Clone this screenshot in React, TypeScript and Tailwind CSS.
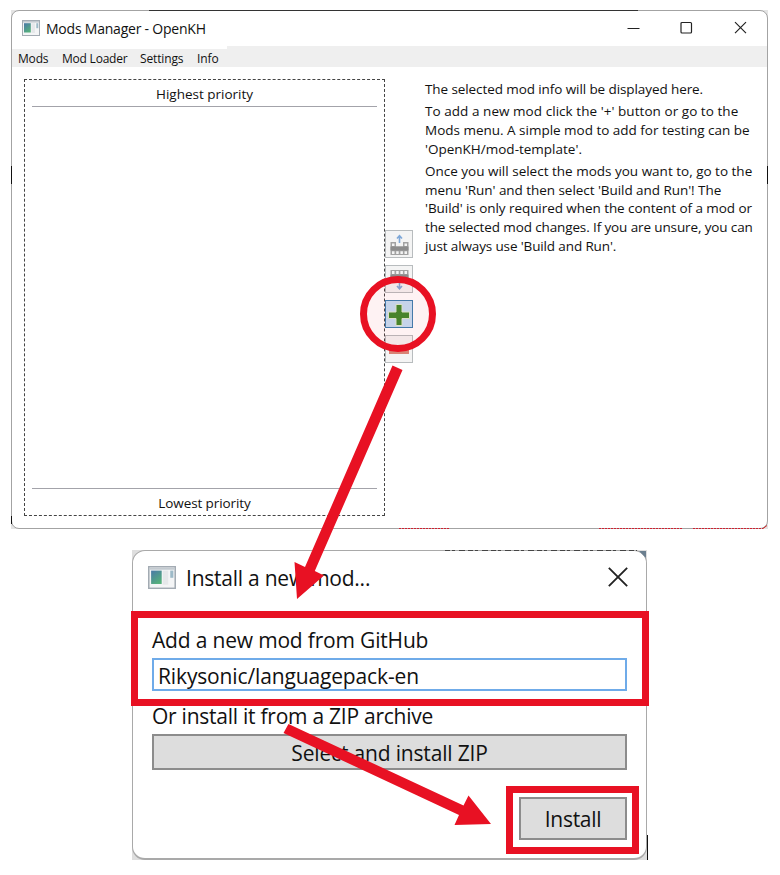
import React from "react";

const RED = "#e81123";

function AppIcon({ className }: { className: string }) {
  return (
    <svg className={className} viewBox="0 0 18 16" preserveAspectRatio="none">
      <defs>
        <linearGradient id="pane" x1="0" y1="0" x2="0.6" y2="1">
          <stop offset="0" stopColor="#4a78a8" />
          <stop offset="1" stopColor="#55b07c" />
        </linearGradient>
      </defs>
      <rect x="0.5" y="0.5" width="17" height="15" fill="#f4f5f6" stroke="#a3abb3" />
      <rect x="1" y="1" width="16" height="1.6" fill="#c3cad0" />
      <rect x="2" y="3.2" width="6.8" height="9.3" fill="url(#pane)" />
      <rect x="9.5" y="3.2" width="3.5" height="9.8" fill="#e6e8ea" />
      <rect x="14.3" y="3.2" width="2" height="5" fill="#9dbac8" />
    </svg>
  );
}

function CloseIcon({ className }: { className: string }) {
  return (
    <svg className={className} viewBox="0 0 12 12">
      <path d="M0.5 0.5 11.5 11.5M11.5 0.5 0.5 11.5" stroke="#222" strokeWidth="1.1" fill="none" />
    </svg>
  );
}

function MoveUp() {
  return (
    <svg className="h-[26px] w-[26px]" viewBox="0 0 26 26">
      <path d="M13.5 12V5M11 7.5 13.500 4.700l2.500 2.800" stroke="#7fa8d8" strokeWidth="1.600" fill="none" />
      <path d="M4.500 11h5.500v4.500h7V11h5.500v13h-18z" fill="#a2a2a2" />
      <path d="M4.500 15.500h18v4h-18z" fill="#8c8c8c" />
      <path d="M6 12.500h2.500v2.500H6zM18.500 12.500H21v2.500h-2.500zM6 20.300h2.500v2.700H6zM10.200 20.300h2.500v2.700h-2.500zM14.400 20.300h2.500v2.700h-2.500zM18.500 20.300H21v2.700h-2.500z" fill="#f4f4f4" />
    </svg>
  );
}

function MoveDown() {
  return (
    <svg className="h-[26px] w-[26px]" viewBox="0 0 26 26">
      <path d="M4.500 4h18v13h-5.500v-4.500h-7V17H4.500z" fill="#a2a2a2" />
      <path d="M4.500 8.500h18v4h-18z" fill="#8c8c8c" />
      <path d="M6 5h2.500v3H6zM10.200 5h2.500v3h-2.500zM14.400 5h2.500v3h-2.500zM18.500 5H21v3h-2.500zM6 13h2.500v2.500H6zM18.500 13H21v2.500h-2.500z" fill="#f4f4f4" />
      <path d="M13.500 15v7.500M11 20l2.500 2.800L16 20" stroke="#7fa8d8" strokeWidth="1.600" fill="none" />
    </svg>
  );
}

const intro = [
  { t: "The selected mod info will be displayed here.", c: "tracking-[-0.09px]" },
];
const add = [
  { t: "To add a new mod click the '+' button or go to the", c: "tracking-[0.05px]" },
  { t: "Mods menu. A simple mod to add for testing can be", c: "tracking-[-0.01px]" },
  { t: "'OpenKH/mod-template'.", c: "tracking-[0px]" },
];
const run = [
  { t: "Once you will select the mods you want to, go to the", c: "tracking-[0px]" },
  { t: "menu 'Run' and then select 'Build and Run'! The", c: "tracking-[-0.05px]" },
  { t: "'Build' is only required when the content of a mod or", c: "tracking-[-0.06px]" },
  { t: "the selected mod changes. If you are unsure, you can", c: "tracking-[-0.12px]" },
  { t: "just always use 'Build and Run'.", c: "tracking-[-0.13px]" },
];

function Para({ lines }: { lines: { t: string; c: string }[] }) {
  return (
    <div className="mb-[3.500px] text-[13.5px] leading-[18.700px]">
      {lines.map((l) => (
        <div key={l.t} className={l.c}>{l.t}</div>
      ))}
    </div>
  );
}

function ManagerWindow() {
  return (
    <section className="ml-[11px] h-[519px] w-[757px] bg-[#e4e4e4]">
      <div className="flex h-full w-full flex-col overflow-hidden rounded-[8px] border border-[#a3a3a3] bg-white">
        <header className="flex h-[35px] shrink-0 items-center pl-[10px]">
          <AppIcon className="mb-[2px] h-[16px] w-[18px]" />
          <h1 className="ml-[6px] grow text-[14px] tracking-[-0.22px]">Mods Manager - OpenKH</h1>
          <svg className="mb-[2px] mr-[1px] h-[13px] w-[121px]" viewBox="0 0 121 13" fill="none" stroke="#222" strokeWidth="1.200">
            <path d="M1.500 7.500h12" />
            <rect x="55" y="1.500" width="10.500" height="10.500" rx="1" />
            <path d="m109 1.200 11 11m0-11-11 11" />
          </svg>
          <div className="w-[19px]" />
        </header>
        <nav className="flex h-[21px] shrink-0 bg-[#efefef] text-[12px]">
          <div className="flex h-full w-[215px] items-center border-t-[3px] border-white pl-[6px] pt-[2px] leading-[18px]">
            <span className="w-[44px] tracking-[-0.18px]">Mods</span>
            <span className="w-[78px] tracking-[-0.22px]">Mod Loader</span>
            <span className="w-[57px] tracking-[-0.14px]">Settings</span>
            <span className="tracking-[-0.1px]">Info</span>
          </div>
        </nav>
        <main className="flex min-h-0 grow pl-[12px] pt-[12px]">
          <div className="flex h-[437px] w-[361px] flex-col justify-between border border-dashed border-[#444] px-[7px] text-center text-[13.5px]">
            <div className="h-[27px] border-b border-[#a3a3aa] leading-[28px]">Highest priority</div>
            <div className="h-[27px] border-t border-[#a3a3aa] leading-[28px] tracking-[-0.1px]">Lowest priority</div>
          </div>
          <div className="mt-[151px] flex w-[28px] flex-col gap-[7px]">
            <button className="h-[28px] border border-[#b8bcbe] bg-[#f4f4f4]"><MoveUp /></button>
            <button className="h-[28px] border border-[#b8bcbe] bg-[#f4f4f4]"><MoveDown /></button>
            <button className="h-[28px] border border-[#3c7fb1] bg-[#c4dff5]">
              <svg className="h-[26px] w-[26px]" viewBox="0 0 26 26">
                <path d="M10 3.500h6v7.500h7.500v6.500h-7.500v7h-6v-7h-7.500v-6.500h7.500z" fill="#3f8a2c" stroke="#dceccf" strokeWidth="1" />
              </svg>
            </button>
            <button className="flex h-[28px] items-center border border-[#b8bcbe] bg-[#f4f4f4]">
              <span className="ml-[3px] mt-[5px] h-[5px] w-[20px] bg-[#d98476]" />
            </button>
          </div>
          <div className="ml-[12px] mt-[1px]">
            <Para lines={intro} />
            <Para lines={add} />
            <Para lines={run} />
          </div>
        </main>
      </div>
    </section>
  );
}

function InstallDialog() {
  return (
    <section className="ml-[132px] mt-[21px] h-[310px] w-[515px] bg-[#dedede] text-[21px]">
      <div className="flex h-full w-full flex-col rounded-[13px] border border-b-2 border-[#a9a9a9] bg-white">
        <header className="flex h-[60px] shrink-0 items-start pl-[15px] pr-[18px] pt-[15px]">
          <AppIcon className="h-[23px] w-[28px]" />
          <h2 className="ml-[10px] grow leading-[25px] tracking-[-0.24px]">Install a new mod...</h2>
          <CloseIcon className="mt-[1px] h-[20px] w-[20px]" />
        </header>
        <div className="-ml-[2px] h-[95px] w-[518px] shrink-0 border-[7px] border-[#e81123] pl-[14px] pr-[15px] pt-[8px]">
          <div className="h-[32px] leading-[28px] tracking-[-0.18px]">Add a new mod from GitHub</div>
          <div className="h-[33px] border-2 border-[#6fabe9] pl-[4px] leading-[32px] tracking-[-0.14px]">Rikysonic/languagepack-en</div>
        </div>
        <div className="px-[19px]">
          <div className="h-[28px] leading-[20px] tracking-[-0.25px]">Or install it from a ZIP archive</div>
          <button className="block h-[36px] w-full border-2 border-[#8c8c8c] bg-[#dddddd] leading-[34px] tracking-[-0.17px]">Select and install ZIP</button>
        </div>
        <div className="ml-auto mr-[7px] mt-[16px] h-[68px] w-[133px] border-[7px] border-[#e81123] py-[4px] pl-[6px] pr-[5px]">
          <button className="h-[43px] w-full border-2 border-[#8c8c8c] bg-[#dddddd] pt-[3px] tracking-[-0.3px]">Install</button>
        </div>
      </div>
    </section>
  );
}

export default function App() {
  return (
    <div className="relative h-[875px] w-[780px] overflow-hidden bg-white pt-[10px] font-['Open_Sans','Noto_Sans',sans-serif] text-[#111]">
      <ManagerWindow />
      <InstallDialog />
      <svg className="pointer-events-none absolute left-0 top-0 h-[875px] w-[780px]" viewBox="0 0 780 875">
        <path d="M149 10.500H638" stroke="#333" />
        <path d="M399 528.500h50M599 528.500h84M693 528.500h70" stroke="#d02030" strokeDasharray="2 1" />
        <path d="M763 528.500l4-3" stroke="#c22" />
        <path d="M767.500 166v18M11.500 166v18M11.500 516v8M647.500 835v25" stroke="#111" />
        <path d="M445 550.500h192" stroke="#444" strokeDasharray="5 2 3 4 6 3" />
        <path d="M639 551h7v7z" fill="#6b7f8f" />
        <circle cx="398" cy="314" r="34.500" fill={RED} fillOpacity="0.055" stroke={RED} strokeWidth="7" />
        <path d="M392.500 365.500 402.500 370 314.800 571 324 575.500 297 599 294.500 562 305 567z" fill={RED} />
        <path d="M288.500 724 463.500 805.500 468.500 795.500 491 824 454.500 825 459 815 283.500 733z" fill={RED} />
      </svg>
    </div>
  );
}
